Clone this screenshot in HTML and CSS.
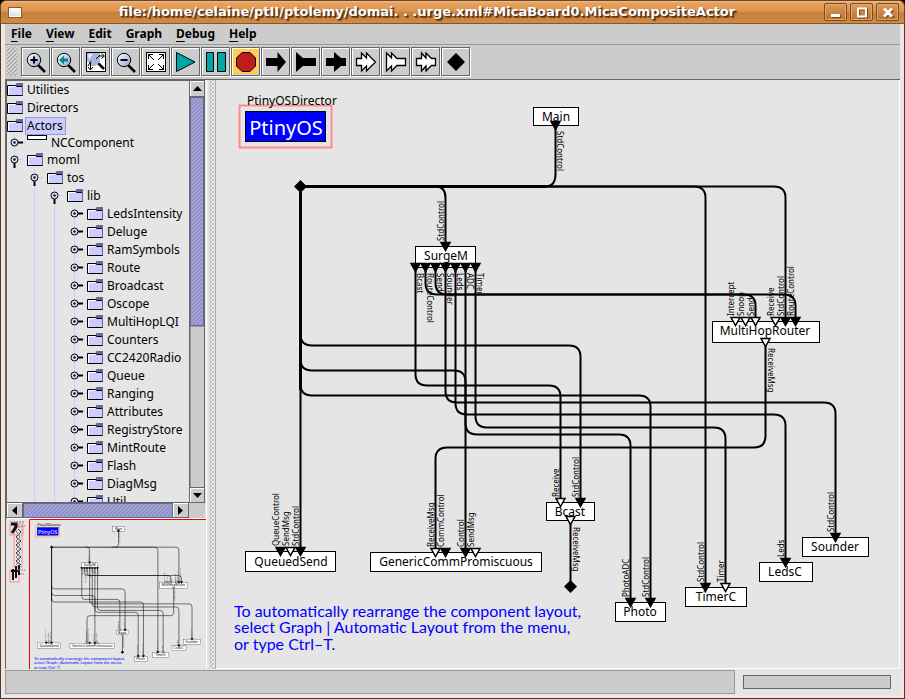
FILE: index.html
```
<!DOCTYPE html>
<html lang="en">
<head>
<meta charset="utf-8">
<title>MicaBoard0.MicaCompositeActor</title>
<link rel="stylesheet" href="styles.css">
</head>
<body>
<svg class="defs" aria-hidden="true">
  <defs>
    <linearGradient id="lens" x1="0" y1="0" x2="1" y2="1">
      <stop offset="0" stop-color="#ffffff"/><stop offset="1" stop-color="#8f9fdc"/>
    </linearGradient>
    <symbol id="folder" viewBox="0 0 17 18">
      <path d="M8 5L9.500 2H16V5Z" fill="#666699"/>
      <path d="M0.500 4.500H8.500L10 5.500H15.500V14.500H0.500Z" fill="#ccccff" stroke="#000"/>
      <path d="M1.500 14V5.500H8" fill="none" stroke="#fff"/>
      <path d="M15.500 4V14" stroke="#666699"/>
    </symbol>
    <symbol id="closed" viewBox="0 0 20 18">
      <path d="M15 8.500H19" stroke="#ccccff"/>
      <path d="M11 8.500H16" stroke="#000" stroke-width="2"/>
      <circle cx="7.500" cy="8.500" r="3.500" fill="#dcdcff" stroke="#000"/>
      <circle cx="7.500" cy="8.500" r="1.200" fill="#111"/>
    </symbol>
    <symbol id="open" viewBox="0 0 20 18">
      <path d="M12 8.500H16" stroke="#ccccff"/>
      <path d="M7.500 12V17" stroke="#000" stroke-width="2"/>
      <circle cx="7.500" cy="8.500" r="3.500" fill="#dcdcff" stroke="#000"/>
      <circle cx="7.500" cy="8.500" r="1.200" fill="#111"/>
    </symbol>
    <path id="tri" d="M-4.500 0H4.500L0 8Z" stroke="#000" stroke-width="1.500"/>
  </defs>
</svg>

<header class="titlebar">
  <button class="winmenu" aria-label="Window menu"></button>
  <h1>file:/home/celaine/ptII/ptolemy/domai. . .urge.xml#MicaBoard0.MicaCompositeActor</h1>
  <div class="winbuttons">
    <button aria-label="Minimize"><svg width="21" height="16"><path d="M6 11.500H15" stroke="#fff" stroke-width="3"/></svg></button>
    <button aria-label="Maximize"><svg width="21" height="16"><path d="M7 4.500H15V12.500H7Z" fill="none" stroke="#fff" stroke-width="2"/></svg></button>
    <button aria-label="Close"><svg width="21" height="16"><path d="M7 4.500L15 12.500M15 4.500L7 12.500" stroke="#fff" stroke-width="3"/></svg></button>
  </div>
</header>

<div class="frame">
<nav class="menubar">
  <button><u>F</u>ile</button><button><u>V</u>iew</button><button><u>E</u>dit</button><button><u>G</u>raph</button><button><u>D</u>ebug</button><button><u>H</u>elp</button>
</nav>

<div class="toolbar" role="toolbar">
  <span class="bumps grip"></span>
  <button aria-label="Zoom in"><svg viewBox="0 0 25 25"><path d="M15 16L22 23" stroke="#000" stroke-width="2.500"/><circle cx="11" cy="11" r="6.700" fill="url(#lens)" stroke="#000"/><path d="M7.500 11H14.500M11 7.500V14.500" stroke="#000" stroke-width="2"/></svg></button>
  <button aria-label="Zoom reset"><svg viewBox="0 0 25 25"><path d="M15 16L22 23" stroke="#000" stroke-width="2.500"/><circle cx="11" cy="11" r="6.700" fill="url(#lens)" stroke="#000"/><path d="M6 11L11 6.500V9.500H15V12.500H11V15.500Z" fill="#008c8c"/></svg></button>
  <button aria-label="Zoom fit"><svg viewBox="0 0 25 25"><rect x="3.500" y="3.500" width="19" height="19" fill="#fff" stroke="#000"/><path d="M15 14L21 20" stroke="#000" stroke-width="2.500"/><path d="M4 4H17V13L12 17H9L4 12Z" fill="#a9b6dd"/><path d="M5 5H10L6 11Z" fill="#e6eaff"/><path d="M13 10L17 6M8 12L5 17" stroke="#000"/><path d="M16 7H21M18.500 4.500L21.500 7L18.500 9.500M7.500 14V20M5 18L7.500 21L10 18" fill="none" stroke="#000"/></svg></button>
  <button aria-label="Zoom out"><svg viewBox="0 0 25 25"><path d="M15 16L22 23" stroke="#000" stroke-width="2.500"/><circle cx="11" cy="11" r="6.700" fill="url(#lens)" stroke="#000"/><path d="M7.500 11H14.500" stroke="#000" stroke-width="2"/></svg></button>
  <button aria-label="Full screen"><svg viewBox="0 0 25 25"><rect x="3.500" y="3.500" width="19" height="19" fill="#fff" stroke="#000"/><path d="M5.500 10V5.500H10M5.500 5.500L11 11M16 5.500H20.500V10M20.500 5.500L15 11M5.500 16V20.500H10M5.500 20.500L11 15M20.500 16V20.500H16M20.500 20.500L15 15" fill="none" stroke="#000"/></svg></button>
  <button aria-label="Run"><svg viewBox="0 0 25 25"><path d="M3.500 3.500L22 13L3.500 22.500Z" fill="#00a5a5" stroke="#000"/></svg></button>
  <button aria-label="Pause"><svg viewBox="0 0 25 25"><path d="M3.500 3.500H10.500V22.500H3.500ZM14.500 3.500H22.500V22.500H14.500Z" fill="#00a5a5" stroke="#000"/></svg></button>
  <button aria-label="Stop" class="active"><svg viewBox="0 0 25 25"><path d="M9 3.500H17L22.500 9V17L17 22.500H9L3.500 17V9Z" fill="#c01c1c" stroke="#000"/></svg></button>
  <button aria-label="Input port"><svg viewBox="0 0 25 25"><path d="M3 9H14.500V3L23 13L14.500 23V17H3Z"/></svg></button>
  <button aria-label="Output port"><svg viewBox="0 0 25 25"><path d="M3 3L10 9H23V17H10L3 23Z"/></svg></button>
  <button aria-label="Input and output port"><svg viewBox="0 0 25 25"><path d="M3 9H11V3L18 9H23V17H18L11 23V17H3Z"/></svg></button>
  <button aria-label="Input multiport"><svg viewBox="0 0 25 25"><path d="M3.500 9.500H8.500V4L13.500 9V4L22.500 13L13.500 22V17L8.500 22V16.500H3.500Z" fill="#fff" stroke="#000" stroke-width="1.300"/></svg></button>
  <button aria-label="Output multiport"><svg viewBox="0 0 25 25"><path d="M3.500 4L8.500 9V4L14 9.500H22.500V16.500H14L8.500 22V17L3.500 22Z" fill="#fff" stroke="#000" stroke-width="1.300"/></svg></button>
  <button aria-label="Input and output multiport"><svg viewBox="0 0 25 25"><path d="M3.500 9.500H8.500V4L13 9V4L18.500 9.500H22.500V16.500H18.500L13 22V17L8.500 22V16.500H3.500Z" fill="#fff" stroke="#000" stroke-width="1.300"/></svg></button>
  <button aria-label="New relation"><svg viewBox="0 0 25 25"><path d="M13 4L22 13L13 22L4 13Z"/></svg></button>
</div>

<main class="workspace">
  <aside class="side">
    <section class="treepane">
      <div class="treeview">
        <ul class="tree root">
          <li><div class="row"><svg class="fold"><use href="#folder"/></svg><span>Utilities</span></div></li>
          <li><div class="row"><svg class="fold"><use href="#folder"/></svg><span>Directors</span></div></li>
          <li><div class="row"><svg class="fold"><use href="#folder"/></svg><span class="selected">Actors</span></div>
            <ul class="tree stem">
              <li><div class="row short"><svg class="knob"><use href="#closed"/></svg><span class="blank"></span><span>NCComponent</span></div></li>
              <li><div class="row"><svg class="knob"><use href="#open"/></svg><svg class="fold"><use href="#folder"/></svg><span>moml</span></div>
                <ul class="tree nested">
                  <li><div class="row"><svg class="knob"><use href="#open"/></svg><svg class="fold"><use href="#folder"/></svg><span>tos</span></div>
                    <ul class="tree nested">
                      <li><div class="row"><svg class="knob"><use href="#open"/></svg><svg class="fold"><use href="#folder"/></svg><span>lib</span></div>
                        <ul class="tree nested">
                          <li><div class="row"><svg class="knob"><use href="#closed"/></svg><svg class="fold"><use href="#folder"/></svg><span>LedsIntensity</span></div></li>
                          <li><div class="row"><svg class="knob"><use href="#closed"/></svg><svg class="fold"><use href="#folder"/></svg><span>Deluge</span></div></li>
                          <li><div class="row"><svg class="knob"><use href="#closed"/></svg><svg class="fold"><use href="#folder"/></svg><span>RamSymbols</span></div></li>
                          <li><div class="row"><svg class="knob"><use href="#closed"/></svg><svg class="fold"><use href="#folder"/></svg><span>Route</span></div></li>
                          <li><div class="row"><svg class="knob"><use href="#closed"/></svg><svg class="fold"><use href="#folder"/></svg><span>Broadcast</span></div></li>
                          <li><div class="row"><svg class="knob"><use href="#closed"/></svg><svg class="fold"><use href="#folder"/></svg><span>Oscope</span></div></li>
                          <li><div class="row"><svg class="knob"><use href="#closed"/></svg><svg class="fold"><use href="#folder"/></svg><span>MultiHopLQI</span></div></li>
                          <li><div class="row"><svg class="knob"><use href="#closed"/></svg><svg class="fold"><use href="#folder"/></svg><span>Counters</span></div></li>
                          <li><div class="row"><svg class="knob"><use href="#closed"/></svg><svg class="fold"><use href="#folder"/></svg><span>CC2420Radio</span></div></li>
                          <li><div class="row"><svg class="knob"><use href="#closed"/></svg><svg class="fold"><use href="#folder"/></svg><span>Queue</span></div></li>
                          <li><div class="row"><svg class="knob"><use href="#closed"/></svg><svg class="fold"><use href="#folder"/></svg><span>Ranging</span></div></li>
                          <li><div class="row"><svg class="knob"><use href="#closed"/></svg><svg class="fold"><use href="#folder"/></svg><span>Attributes</span></div></li>
                          <li><div class="row"><svg class="knob"><use href="#closed"/></svg><svg class="fold"><use href="#folder"/></svg><span>RegistryStore</span></div></li>
                          <li><div class="row"><svg class="knob"><use href="#closed"/></svg><svg class="fold"><use href="#folder"/></svg><span>MintRoute</span></div></li>
                          <li><div class="row"><svg class="knob"><use href="#closed"/></svg><svg class="fold"><use href="#folder"/></svg><span>Flash</span></div></li>
                          <li><div class="row"><svg class="knob"><use href="#closed"/></svg><svg class="fold"><use href="#folder"/></svg><span>DiagMsg</span></div></li>
                          <li><div class="row"><svg class="knob"><use href="#closed"/></svg><svg class="fold"><use href="#folder"/></svg><span>Util</span></div></li>
                        </ul>
                      </li>
                    </ul>
                  </li>
                </ul>
              </li>
            </ul>
          </li>
        </ul>
      </div>
      <div class="vscroll">
        <button aria-label="Scroll up"><svg width="9" height="5"><path d="M0 5L4.500 0L9 5Z"/></svg></button>
        <div class="vthumb"></div><div class="vtrack"></div>
        <button aria-label="Scroll down"><svg width="9" height="5"><path d="M0 0L4.500 5L9 0Z"/></svg></button>
      </div>
      <div class="hscroll">
        <button aria-label="Scroll left"><svg width="5" height="9"><path d="M5 0L0 4.500L5 9Z"/></svg></button>
        <div class="hthumb"></div>
        <button aria-label="Scroll right"><svg width="5" height="9"><path d="M0 0L5 4.500L0 9Z"/></svg></button>
      </div>
    </section>
    <section class="overview">
      <svg role="img" aria-label="Graph overview">
        <g fill="none" stroke="#ff9090">
          <rect x="4" y="5" width="13" height="11"/><rect x="8" y="8" width="8" height="40"/><rect x="4" y="51" width="9" height="12"/>
        </g>
        <path d="M12 10L15 13L10 18L15 22L10 26L15 30L10 34L15 38L10 42L15 46" fill="none" stroke="#333"/>
        <path d="M9 10L14 18L10 22L14 26L10 30L14 34L10 38L14 42L10 46" fill="none" stroke="#777"/>
        <path d="M5 5H10V8L6 14" fill="none" stroke="#111" stroke-width="3"/>
        <path d="M7 50V61M10 47V59M13 46V56M5 52H14" fill="none" stroke="#111" stroke-width="2"/>
        <path d="M4 3H19M12 7H19M12 51H19M14 55H18" stroke="#777" stroke-dasharray="2 1"/>
        <use href="#diagram" transform="translate(-33.300 -20.800) scale(.2625)"/>
        <path d="M201 .5H23.500V150" fill="none" stroke="#e00" />
      </svg>
    </section>
  </aside>
  <div class="divider"><span class="bumps"></span></div>
  <section class="canvas">
    <svg role="img" aria-label="Component graph">
      <g transform="translate(-216 -80)"><g id="diagram">
        <g class="director">
          <rect x="239.500" y="105.500" width="92" height="42" fill="none" stroke="#ff8c8c" stroke-width="2"/>
          <rect x="245.500" y="111.500" width="80" height="30" fill="#00f" stroke="#000"/>
          <text x="247" y="105" class="name">PtinyOSDirector</text>
          <text x="286" y="135" class="big">PtinyOS</text>
        </g>
        <g class="nodes">
          <rect x="533.500" y="107.500" width="45" height="18"/><rect x="415.500" y="246.500" width="60" height="21"/>
          <rect x="712.500" y="321.500" width="107" height="21"/><rect x="245.500" y="551.500" width="90" height="20"/>
          <rect x="370.500" y="552.500" width="171" height="19"/><rect x="546.500" y="502.500" width="48" height="18"/>
          <rect x="615.500" y="602.500" width="50" height="19"/><rect x="685.500" y="587.500" width="61" height="19"/>
          <rect x="759.500" y="562.500" width="53" height="19"/><rect x="802.500" y="537.500" width="66" height="19"/>
        </g>
        <g class="name mid">
          <text x="556" y="121">Main</text><text x="446" y="260">SurgeM</text><text x="765" y="335">MultiHopRouter</text>
          <text x="291" y="566">QueuedSend</text><text x="456" y="566">GenericCommPromiscuous</text><text x="570" y="516">Bcast</text>
          <text x="640" y="616">Photo</text><text x="716" y="601">TimerC</text><text x="785" y="576">LedsC</text><text x="835" y="551">Sounder</text>
        </g>
        <g class="wires">
          <path d="M555.500 125V174Q555.500 186.500 545 186.500H530"/>
          <path d="M545 186.500H300.500V390" class="thick"/>
          <path d="M430 186.500H436Q445.500 186.500 445.500 198V245"/>
          <path d="M545 186.500H774Q785.500 186.500 785.500 198V320"/>
          <path d="M545 186.500H694Q705.500 186.500 705.500 198V586"/>
          <path d="M300.500 186V550"/>
          <path d="M300.500 334Q300.500 345.500 312 345.500H569Q580.500 345.500 580.500 357V500"/>
          <path d="M300.500 359Q300.500 370.500 312 370.500H454Q465.500 370.500 465.500 382V550"/>
          <path d="M300.500 384Q300.500 395.500 312 395.500H639Q650.500 395.500 650.500 407V600"/>
          <path d="M415.500 268V374Q415.500 385.500 427 385.500H549Q560.500 385.500 560.500 397V500"/>
          <path d="M425.500 268V283Q425.500 294.500 437 294.500H784Q795.500 294.500 795.500 306V320"/>
          <path d="M435.500 268V283Q435.500 294.500 447 294.500H744Q755.500 294.500 755.500 306V320"/>
          <path d="M445.500 268V391Q445.500 402.500 457 402.500H824Q835.500 402.500 835.500 414V535"/>
          <path d="M455.500 268V403Q455.500 414.500 467 414.500H774Q785.500 414.500 785.500 426V560"/>
          <path d="M465.500 268V423Q465.500 434.500 477 434.500H619Q630.500 434.500 630.500 446V600"/>
          <path d="M475.500 268V416Q475.500 427.500 487 427.500H714Q725.500 427.500 725.500 439V586"/>
          <path d="M765.500 342V436Q765.500 447.500 754 447.500H447Q435.500 447.500 435.500 459V550"/>
          <path d="M570.500 520V586"/>
        </g>
        <path d="M300.500 180L307 186.500L300.500 193L294 186.500ZM570.500 580L577 586.500L570.500 593L564 586.500Z"/>
        <g class="ports">
          <use href="#tri" x="555.500" y="121.500"/><use href="#tri" x="445.500" y="242.500"/>
          <use href="#tri" x="415.500" y="263.500"/><use href="#tri" x="425.500" y="263.500"/><use href="#tri" x="435.500" y="263.500"/><use href="#tri" x="445.500" y="263.500"/><use href="#tri" x="455.500" y="263.500"/><use href="#tri" x="465.500" y="263.500"/><use href="#tri" x="475.500" y="263.500"/>
          <use href="#tri" x="785.500" y="317.500"/><use href="#tri" x="795.500" y="317.500"/>
          <use href="#tri" x="280.500" y="547.500"/><use href="#tri" x="300.500" y="547.500"/><use href="#tri" x="445.500" y="548.500"/><use href="#tri" x="465.500" y="548.500"/>
          <use href="#tri" x="580.500" y="498.500"/><use href="#tri" x="630.500" y="598.500"/><use href="#tri" x="650.500" y="598.500"/>
          <use href="#tri" x="705.500" y="583.500"/><use href="#tri" x="785.500" y="558.500"/><use href="#tri" x="835.500" y="533.500"/>
        </g>
        <g class="ports hollow">
          <use href="#tri" x="735.500" y="317.500"/><use href="#tri" x="745.500" y="317.500"/><use href="#tri" x="755.500" y="317.500"/><use href="#tri" x="775.500" y="317.500"/><use href="#tri" x="765.500" y="338.500"/>
          <use href="#tri" x="290.500" y="547.500"/><use href="#tri" x="435.500" y="548.500"/><use href="#tri" x="475.500" y="548.500"/>
          <use href="#tri" x="560.500" y="498.500"/><use href="#tri" x="570.500" y="516.500"/><use href="#tri" x="725.500" y="583.500"/>
        </g>
        <g class="label">
          <text transform="translate(557 131) rotate(90)">StdControl</text>
          <text transform="translate(417 273) rotate(90)">Bcast</text>
          <text transform="translate(427 273) rotate(90)">RouteControl</text>
          <text transform="translate(437 273) rotate(90)">Send</text>
          <text transform="translate(447 273) rotate(90)">Sounder</text>
          <text transform="translate(457 273) rotate(90)">Leds</text>
          <text transform="translate(467 273) rotate(90)">ADC</text>
          <text transform="translate(477 273) rotate(90)">Timer</text>
          <text transform="translate(768 348) rotate(90)">ReceiveMsg</text>
          <text transform="translate(573 527) rotate(90)">ReceiveMsg</text>
          <text transform="translate(444 241) rotate(-90)">StdControl</text>
          <text transform="translate(734 316) rotate(-90)">Intercept</text>
          <text transform="translate(744 316) rotate(-90)">Snoop</text>
          <text transform="translate(754 316) rotate(-90)">Send</text>
          <text transform="translate(774 316) rotate(-90)">Receive</text>
          <text transform="translate(784 316) rotate(-90)">StdControl</text>
          <text transform="translate(794 316) rotate(-90)">RouteControl</text>
          <text transform="translate(279 546) rotate(-90)">QueueControl</text>
          <text transform="translate(289 546) rotate(-90)">SendMsg</text>
          <text transform="translate(299 546) rotate(-90)">StdControl</text>
          <text transform="translate(434 547) rotate(-90)">ReceiveMsg</text>
          <text transform="translate(444 547) rotate(-90)">CommControl</text>
          <text transform="translate(464 547) rotate(-90)">Control</text>
          <text transform="translate(474 547) rotate(-90)">SendMsg</text>
          <text transform="translate(559 497) rotate(-90)">Receive</text>
          <text transform="translate(579 497) rotate(-90)">StdControl</text>
          <text transform="translate(629 597) rotate(-90)">PhotoADC</text>
          <text transform="translate(649 597) rotate(-90)">StdControl</text>
          <text transform="translate(704 582) rotate(-90)">StdControl</text>
          <text transform="translate(724 582) rotate(-90)">Timer</text>
          <text transform="translate(784 557) rotate(-90)">Leds</text>
          <text transform="translate(834 532) rotate(-90)">StdControl</text>
        </g>
        <g class="note">
          <text x="234" y="617">To automatically rearrange the component layout,</text>
          <text x="234" y="633">select Graph | Automatic Layout from the menu,</text>
          <text x="234" y="650">or type Ctrl–T.</text>
        </g>
      </g></g>
    </svg>
  </section>
</main>

<footer class="status">
  <div class="message"></div>
  <div class="progress" role="progressbar" aria-label="Progress"></div>
</footer>
</div>
</body>
</html>
```
FILE: styles.css
```
* { box-sizing: border-box; }

body {
  margin: 0;
  height: 100vh;
  display: flex;
  flex-direction: column;
  overflow: hidden;
  background: #000;
  font: 12px "Noto Sans", sans-serif;
  color: #000;
}

button { font: inherit; color: inherit; margin: 0; padding: 0; border: 0; background: none; }
ul { list-style: none; margin: 0; padding: 0; }
svg { display: block; }
.defs { position: absolute; width: 0; height: 0; }

/* Window title bar */
.titlebar {
  flex: none;
  height: 24px;
  display: flex;
  align-items: center;
  padding: 0 5px 0 7px;
  border: 1px solid #6b4423;
  border-bottom-color: #8a5526;
  border-radius: 6px 6px 0 0;
  background: linear-gradient(#f2bd8a 0, #e6a261 2px, #dc9650 10px, #c47f38 12px, #d18b45 100%);
}
.titlebar h1 {
  flex: 1;
  margin: 0;
  text-align: center;
  white-space: nowrap;
  overflow: hidden;
  font: bold 13px/20px "DejaVu Sans", sans-serif;
  color: #fff;
  text-shadow: 1px 1px 1px #4a2f14, 2px 2px 1px #6b4423;
}
.winmenu { width: 14px; height: 11px; border: 1px solid #8a5a2c; background: linear-gradient(#fff, #dcdcdc); box-shadow: inset 0 0 0 1px #fff; margin-right: 8px; }
.winbuttons { display: flex; gap: 3px; }
.winbuttons button {
  width: 23px;
  height: 18px;
  border: 1px solid #7a4a20;
  border-radius: 2px;
  background: linear-gradient(#dc9a58, #b9752f);
  box-shadow: inset 0 0 0 1px #e0a974;
}
.winbuttons svg { filter: drop-shadow(1px 1px 0 #7a4a20); }

/* Window frame */
.frame {
  flex: 1;
  min-height: 0;
  display: flex;
  flex-direction: column;
  border: solid #463c35;
  border-width: 0 1px 1px;
  padding: 0 4px 3px;
  background: #eee6df;
}

.menubar {
  flex: none;
  height: 21px;
  display: flex;
  gap: 14px;
  padding-left: 6px;
  background: #ccc;
  border-bottom: 1px solid #999;
  font-weight: bold;
}
.menubar button { line-height: 20px; }
.menubar u { text-underline-offset: 3px; }

.toolbar {
  flex: none;
  display: flex;
  gap: 1px;
  height: 35px;
  padding: 2px 0 0 2px;
  background: #ccc;
  border-bottom: 1px solid #666;
}
.toolbar button {
  width: 29px;
  height: 29px;
  padding: 1px;
  border: 1px solid #666;
  box-shadow: 1px 1px 0 #fff, inset 1px 1px 0 #fff;
}
.toolbar button svg { width: 25px; height: 25px; }
.toolbar .active svg { background: #ffcc55; }

.bumps {
  background-image:
    conic-gradient(from 90deg at 3px 3px, transparent 75%, transparent 0),
    radial-gradient(circle at 1px 1px, #fff 0, transparent 1px),
    radial-gradient(circle at 1px 1px, #fff 0, transparent 1px),
    radial-gradient(circle at 1px 1px, #444 0, transparent 1px),
    radial-gradient(circle at 1px 1px, #444 0, transparent 1px);
  background-size: 4px 4px;
  background-position: 0 0, 0 0, 2px 2px, 1px 1px, 3px 3px;
}
.grip { width: 10px; height: 29px; margin-right: 3px; }

/* Workspace */
.workspace { flex: 1; min-height: 0; display: flex; background: #e5e5e5; }
.side { flex: none; width: 201px; display: flex; flex-direction: column; border-left: 1px solid #666; }

.treepane {
  flex: 1;
  min-height: 0;
  display: grid;
  grid-template-columns: 1fr 16px;
  grid-template-rows: 1fr 15px;
  border-top: 1px solid #666;
  border-left: 1px solid #666;
  border-bottom: 1px solid #fff;
  margin-right: 1px;
}
.treeview { min-height: 0; overflow: hidden; border-bottom: 1px solid #666; }
.row { display: flex; align-items: center; height: 18px; white-space: nowrap; }
.short { height: 16px; }
.row span { line-height: 16px; }
.fold { flex: none; width: 17px; height: 18px; margin-right: 3px; }
.knob { flex: none; width: 20px; height: 18px; }
.row .blank { flex: none; align-self: flex-start; width: 20px; height: 5px; margin-right: 4px; border: 1px solid #000; background: #fff; }
.row .selected { margin-left: -1px; padding: 0 2px 0 1px; line-height: 16px; background: #ccccff; outline: 1px solid #9999cc; }
.stem { background: linear-gradient(#ccccff, #ccccff) 7px 0 / 1px 20px no-repeat; }
.nested { margin-left: 20px; background: linear-gradient(#ccccff, #ccccff) 7px 0 / 1px 100% no-repeat; }

.vscroll, .hscroll { display: flex; background: #ccc; }
.vscroll { flex-direction: column; border-left: 1px solid #666; border-right: 1px solid #666; }
.hscroll { grid-column: 1 / 3; padding-right: 16px; }
.vscroll button, .hscroll button {
  flex: none;
  display: flex;
  align-items: center;
  justify-content: center;
  width: 14px;
  height: 16px;
  box-shadow: inset 1px 1px 0 #fff;
  border-bottom: 1px solid #666;
}
.hscroll button { width: 16px; height: 15px; border-right: 1px solid #666; }
.vscroll button:last-child { border-top: 1px solid #666; }
.vthumb, .hthumb {
  background-color: #9999cc;
  background-image:
    radial-gradient(circle at 1px 1px, #ccccff 0, transparent 1px),
    radial-gradient(circle at 1px 1px, #ccccff 0, transparent 1px),
    radial-gradient(circle at 1px 1px, #666699 0, transparent 1px),
    radial-gradient(circle at 1px 1px, #666699 0, transparent 1px);
  background-size: 4px 4px;
  background-position: 0 0, 2px 2px, 1px 1px, 3px 3px;
  border: 1px solid #666699;
  box-shadow: inset 0 0 0 1px #9999cc;
}
.vthumb { flex: 228; }
.vtrack { flex: 162; box-shadow: inset 1px 1px 0 #999; }
.hthumb { flex: 1; }

.overview { flex: none; height: 150px; }
.overview svg { width: 100%; height: 150px; overflow: hidden; }

.divider { flex: none; width: 10px; display: flex; justify-content: center; border-right: 1px solid #aaa; border-left: 1px solid #fff; }
.divider .bumps { width: 5px; }

.canvas { flex: 1; min-width: 0; border-right: 1px solid #fff; border-bottom: 1px solid #fff; }
.canvas svg { width: 100%; height: 100%; overflow: hidden; }

/* Graph drawing */
.nodes { fill: #fff; stroke: #000; }
.wires { fill: none; stroke: #000; stroke-width: 2; }
.wires .thick { stroke-width: 3; }
.hollow { fill: #fff; }
.name { font-size: 12px; }
.mid, .big { text-anchor: middle; }
.big { font-size: 20px; fill: #fff; }
.label { font-size: 8px; }
.note { font: 16px Lato, sans-serif; fill: #00f; }

/* Status bar */
.status { flex: none; height: 26px; display: flex; align-items: center; gap: 8px; padding: 1px 9px 1px 0; background: #e5e5e5; }
.message { flex: 1; align-self: stretch; background: #ccc; border: 1px solid #999; }
.progress { width: 148px; height: 14px; background: #ccc; border: 1px solid #666; }
```
